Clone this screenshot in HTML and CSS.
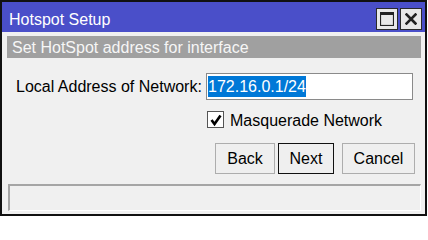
FILE: index.html
```html
<!DOCTYPE html>
<html>
<head>
<meta charset="utf-8">
<link rel="stylesheet" href="styles.css">
</head>
<body>
<div class="window">
  <div class="titlebar">
    <span class="title">Hotspot Setup</span>
    <div class="tbtns">
      <div class="tbtn">
        <svg width="14" height="14" viewBox="0 0 14 14"><rect x="0.5" y="0.5" width="13" height="13" fill="none" stroke="#222" stroke-width="1.2"/><rect x="0" y="0" width="14" height="3" fill="#222"/></svg>
      </div>
      <div class="tbtn">
        <svg width="12" height="12" viewBox="0 0 12 12"><path d="M1.5 1.5 L10.5 10.5 M10.5 1.5 L1.5 10.5" stroke="#222" stroke-width="2.6" stroke-linecap="square"/></svg>
      </div>
    </div>
  </div>
  <div class="content">
    <div class="heading">Set HotSpot address for interface</div>
    <div class="form">
      <label class="label">Local Address of Network:</label>
      <div class="input"><span class="sel">172.16.0.1/24</span></div>
      <div></div>
      <div class="check-row">
        <span class="checkbox">
          <svg width="14" height="14" viewBox="0 0 14 14"><path d="M2.5 7 L5.5 11 L11.5 2.5" fill="none" stroke="#000" stroke-width="2.6"/></svg>
        </span>
        <span class="check-label">Masquerade Network</span>
      </div>
    </div>
    <div class="buttons">
      <button class="btn btn-back">Back</button>
      <button class="btn btn-next">Next</button>
      <button class="btn btn-cancel">Cancel</button>
    </div>
    <div class="status"></div>
  </div>
</div>
</body>
</html>
```

FILE: styles.css
```css
html, body {
  margin: 0;
  padding: 0;
  background: #ffffff;
}

body {
  font-family: "Liberation Sans", Arial, sans-serif;
  font-size: 16px;
  color: #000;
}

.window {
  box-sizing: border-box;
  width: 427px;
  height: 216px;
  border: 2px solid #111;
  background: #f0f0f0;
  display: flex;
  flex-direction: column;
}

.titlebar {
  height: 30px;
  box-sizing: border-box;
  background: #4a4fc9;
  display: flex;
  align-items: flex-start;
  justify-content: space-between;
  padding: 6px 3px 0 7px;
}

.title {
  color: #fff;
  line-height: 20px;
  margin-top: 2px;
}

.tbtns {
  display: flex;
  gap: 2px;
}

.tbtn {
  box-sizing: border-box;
  width: 22px;
  height: 22px;
  border: 1px solid #2a2a2a;
  background: #e8e8e8;
  display: flex;
  align-items: center;
  justify-content: center;
}

.content {
  flex: 1;
  display: flex;
  flex-direction: column;
  padding: 4px 4px 3px 5px;
}

.heading {
  height: 22px;
  box-sizing: border-box;
  background: #a0a0a0;
  color: #f6f6f6;
  padding: 2px 0 0 5px;
  line-height: 20px;
}

.form {
  display: grid;
  grid-template-columns: 187px 207px;
  column-gap: 3px;
  row-gap: 11px;
  margin: 15px 0 0 9px;
  align-items: center;
}

.label {
  line-height: 19px;
  white-space: nowrap;
}

.input {
  box-sizing: border-box;
  height: 27px;
  border: 1px solid #8a8a8a;
  background: #fff;
  display: flex;
  align-items: center;
  padding-left: 1px;
}

.sel {
  background: #0078d7;
  color: #fff;
  line-height: 21px;
}

.check-row {
  display: flex;
  align-items: center;
  height: 17px;
}

.checkbox {
  box-sizing: border-box;
  width: 17px;
  height: 17px;
  margin-left: 1px;
  border: 1px solid #555;
  background: #fff;
  display: flex;
  align-items: center;
  justify-content: center;
}

.check-label {
  margin-left: 6px;
  line-height: 19px;
  position: relative;
  top: 1px;
}

.buttons {
  display: flex;
  justify-content: flex-end;
  margin: 15px 6px 0 0;
}

.btn {
  box-sizing: border-box;
  height: 31px;
  font-family: "Liberation Sans", Arial, sans-serif;
  font-size: 16px;
  color: #000;
  background: #efefef;
  border: 1px solid #adadad;
  padding: 0;
  margin: 0;
}

.btn-back { width: 60px; }
.btn-next { width: 56px; margin-left: 3px; border-color: #111; }
.btn-cancel { width: 73px; margin-left: 8px; }

.status {
  box-sizing: border-box;
  height: 27px;
  margin: 10px 0 0 1px;
  border-top: 2px solid #a5a5a5;
  border-left: 2px solid #a5a5a5;
  border-bottom: 1px solid #fff;
  border-right: 1px solid #fff;
}
```
